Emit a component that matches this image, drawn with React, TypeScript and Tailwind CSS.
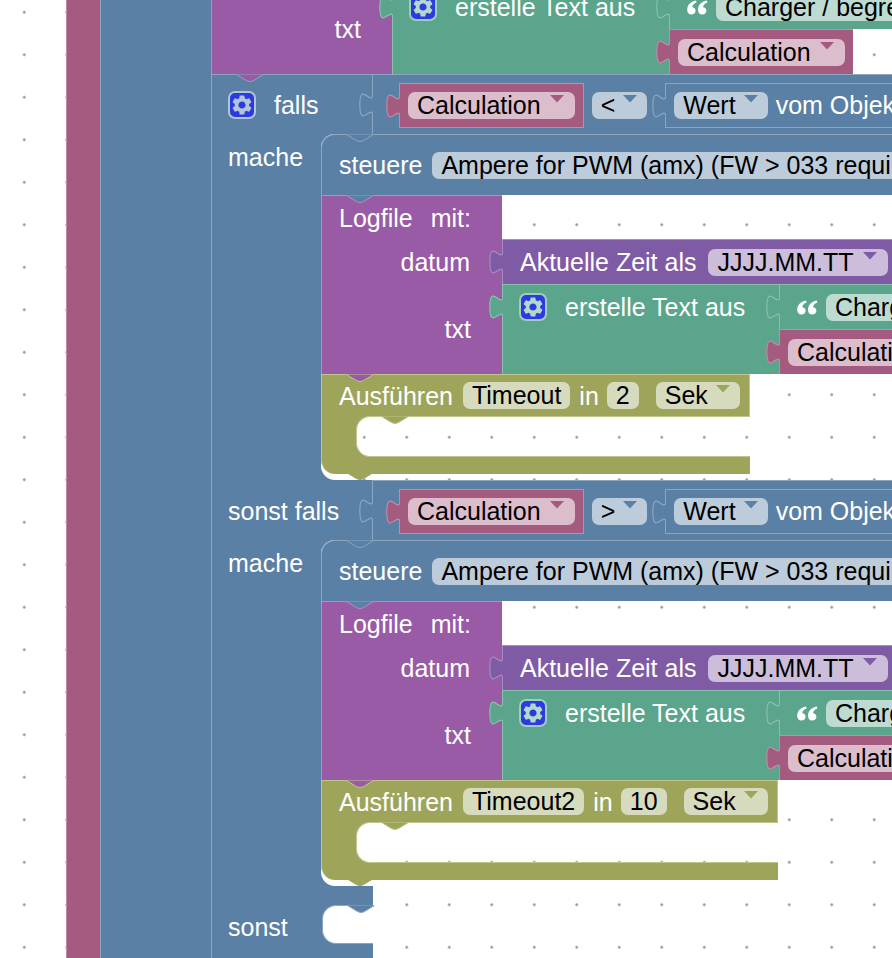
import { ReactNode } from "react";
import { MdSettings } from "react-icons/md";

// workspace grid, fixed so every cut-out of a block lines up with the same dots
const dots =
  "bg-white bg-[radial-gradient(circle,#999999_1px,transparent_1.6px)] bg-[length:42.5px_42.5px] bg-[position:3px_-9px] bg-fixed";

const tones = {
  blue: { pill: "bg-[#bdccdb]", arrow: "fill-[#5b80a5]" },
  maroon: { pill: "bg-[#dbbdcc]", arrow: "fill-[#a55b80]" },
  violet: { pill: "bg-[#ccbddb]", arrow: "fill-[#805ba5]" },
  olive: { pill: "bg-[#d7dbbd]", arrow: "fill-[#9ea55b]" },
  green: { pill: "bg-[#bddbd1]", arrow: "fill-[#5ba58c]" },
};

function Pill({ tone, arrow, tight, children }: { tone: keyof typeof tones; arrow?: boolean; tight?: boolean; children: ReactNode }) {
  const t = tones[tone];
  return (
    <span className={`flex h-[27px] shrink-0 items-start whitespace-pre rounded-[7px] pl-[9px] leading-[27px] text-black ${arrow ? (tight ? "pr-[10px]" : "pr-[11px]") : "pr-[9px]"} ${t.pill}`}>
      {children}
      {arrow && (
        <svg width="14" height="8" viewBox="0 0 14 8" className={`mt-[3px] ${tight ? "ml-[8px]" : "ml-[9px]"} ${t.arrow}`}>
          <path d="M0 0H14L7 7.5Z" />
        </svg>
      )}
    </span>
  );
}

// plain block text sits a pixel lower than the field text
function Label({ children, className = "" }: { children: ReactNode; className?: string }) {
  return <span className={`whitespace-pre pt-[2px] ${className}`}>{children}</span>;
}

// side puzzle tab of a value block
function Tab({ className, top = "top-[9px]" }: { className: string; top?: string }) {
  return (
    <svg width="14" height="26" viewBox="0 0 8.5 15.5" className={`absolute -left-[14px] z-10 ${top} ${className}`}>
      <path d="M8.5 15.25c0-10-8 8-8-7.5s8 2.5 8-7.5" strokeWidth="0.7" />
    </svg>
  );
}

// notch that a stacked block hangs into the next one
function Notch({ className, pos }: { className: string; pos: string }) {
  return (
    <svg width="28" height="9" viewBox="0 0 28 9" className={`absolute z-10 ${pos} ${className}`}>
      <path d="M0.5 0.5L10.5 6.6Q14 8.8 17.5 6.6L27.5 0.5" strokeWidth="1" />
    </svg>
  );
}

function Gear({ className, border }: { className: string; border: string }) {
  return (
    <span className={`flex h-[28px] w-[28px] shrink-0 items-center justify-center rounded-[7px] border-2 bg-[#2a3ce0] ${border}`}>
      <MdSettings size={24} className={className} />
    </span>
  );
}

function Quote() {
  return (
    <svg width="21" height="15" viewBox="0 0 21 15" className="shrink-0 fill-white">
      <path d="M9 0.6C3.6 1.8 0.2 5 0.2 9.8 0.2 12.8 1.8 14.6 4.4 14.6 6.8 14.6 8.6 13 8.6 10.8 8.6 8.6 7 7.2 5.2 7.2 5.4 5.2 6.8 3.6 9.6 2.6Z" />
      <path d="M19.8 0.6C14.4 1.8 11 5 11 9.8 11 12.8 12.6 14.6 15.2 14.6 17.6 14.6 19.4 13 19.4 10.8 19.4 8.6 17.8 7.2 16 7.2 16.2 5.2 17.6 3.6 20.4 2.6Z" />
    </svg>
  );
}

function LogBlock({ className = "" }: { className?: string }) {
  return (
    <div className={`relative flex h-[179px] shrink-0 text-white ${className}`}>
      <div className="flex w-[181px] shrink-0 flex-col border-l border-t border-[#b88cc0] bg-[#995ba5]">
        <div className="flex h-[44px] items-center gap-[18px] pl-[17px]">
          <Label>Logfile</Label>
          <Label>mit:</Label>
        </div>
        <div className="flex h-[44px] items-center justify-end pr-[32px]">
          <Label>datum</Label>
        </div>
        <div className="flex h-[89px] items-center justify-end pr-[31px]">
          <Label>txt</Label>
        </div>
      </div>
      <div className="flex w-[500px] flex-col">
        <div className="h-[44px]" />
        <div className="relative flex h-[45px] w-[394px] items-center border-l border-t border-[#a68cc0] bg-[#805ba5] pl-[17px]">
          <Tab className="fill-[#805ba5] stroke-[#a68cc0]" />
          <Label>Aktuelle Zeit als</Label>
          <span className="ml-[12px]">
            <Pill tone="violet" arrow>JJJJ.MM.TT</Pill>
          </span>
        </div>
        <div className="flex h-[90px]">
          <div className="relative w-[277px] shrink-0 border-l border-t border-[#8cc0ae] bg-[#5ba58c] pl-[16px]">
            <Tab className="fill-[#5ba58c] stroke-[#8cc0ae]" />
            <div className="flex h-[44px] items-center">
              <Gear className="text-[#b4d8cb]" border="border-[#a4ccbe]" />
              <Label className="ml-[18px]">erstelle Text aus</Label>
            </div>
          </div>
          <div className="flex w-[400px] flex-col">
            <div className="relative flex h-[45px] items-center border-l border-t border-[#8cc0ae] bg-[#5ba58c] pl-[17px]">
              <Tab className="fill-[#5ba58c] stroke-[#8cc0ae]" />
              <Quote />
              <span className="ml-[8px]">
                <Pill tone="green">Charger / begrenzen auf Minimum</Pill>
              </span>
            </div>
            <div className="relative flex h-[45px] w-[184px] items-center border-l border-t border-[#c08ca6] bg-[#a55b80] pl-[8px]">
              <Tab className="fill-[#a55b80] stroke-[#c08ca6]" />
              <Pill tone="maroon" arrow>Calculation</Pill>
            </div>
          </div>
        </div>
      </div>
      <Notch className="fill-[#5b80a5] stroke-[#b88cc0]" pos="left-[25px] top-0" />
    </div>
  );
}

function Exec({ width, name, secs }: { width: string; name: string; secs: string }) {
  return (
    <div className={`relative flex h-[100px] shrink-0 flex-col ${width}`}>
      <div className="flex h-[42px] items-center border-l border-r border-t border-[#c0c58c] bg-[#9ea55b] pl-[17px] text-white">
        <Label>Ausführen</Label>
        <span className="ml-[10px]">
          <Pill tone="olive">{name}</Pill>
        </span>
        <Label className="ml-[9px]">in</Label>
        <span className="ml-[8px]">
          <Pill tone="olive">{secs}</Pill>
        </span>
        <span className="ml-[17px]">
          <Pill tone="olive" arrow tight>Sek</Pill>
        </span>
      </div>
      <div className="h-[41px] border-l border-[#c0c58c] bg-[#9ea55b] pl-[34px]">
        <div className={`relative h-full rounded-l-[14px] border-b border-l border-t border-[#c0c58c] ${dots}`}>
          <Notch className="fill-[#9ea55b] stroke-[#c0c58c]" pos="left-[24px] -top-px" />
        </div>
      </div>
      <div className="h-[17px] rounded-bl-[14px] border-l border-[#c0c58c] bg-[#9ea55b]" />
      <Notch className="fill-[#9ea55b] stroke-[#9ea55b]" pos="left-[25px] -bottom-[7px]" />
      <Notch className="fill-[#995ba5] stroke-[#c0c58c]" pos="left-[25px] top-0" />
    </div>
  );
}

function Statement({ execWidth, name, secs }: { execWidth: string; name: string; secs: string }) {
  return (
    <div className="flex h-[346px] shrink-0">
      <div className="w-[110px] shrink-0 border-l border-[#8ca6c0] bg-[#5b80a5] pl-[16px] text-white">
        <div className="flex h-[46px] items-center">
          <Label>mache</Label>
        </div>
      </div>
      <div className="w-[600px] bg-[#5b80a5]">
        <div className={`flex h-full flex-col rounded-l-[14px] ${dots}`}>
          <div className="relative flex h-[61px] shrink-0 items-center rounded-tl-[14px] border-l border-t border-[#8ca6c0] bg-[#5b80a5] pl-[17px] text-white">
            <Label>steuere</Label>
            <span className="ml-[10px] w-[520px]">
              <Pill tone="blue">Ampere for PWM (amx) (FW &gt; 033 required)</Pill>
            </span>
            <Notch className="fill-[#5b80a5] stroke-[#8ca6c0]" pos="left-[24px] -top-px" />
          </div>
          <LogBlock />
          <Exec width={execWidth} name={name} secs={secs} />
        </div>
      </div>
    </div>
  );
}

function Condition({ op, children, tail }: { op: string; children: ReactNode; tail?: boolean }) {
  return (
    <div className="relative flex h-[60px] shrink-0 text-white">
      <div className={`flex h-full w-[161px] shrink-0 items-start border-l border-[#8ca6c0] bg-[#5b80a5] pl-[16px] pt-[16px] ${tail ? "border-t" : ""}`}>
        {children}
      </div>
      <div className="relative flex h-full w-[560px] items-start border-l border-t border-[#8ca6c0] bg-[#5b80a5] pl-[26px] pt-[8px]">
        <Tab className="fill-[#5b80a5] stroke-[#8ca6c0]" top="top-[17px]" />
        <div className="relative flex h-[45px] items-center border border-[#c08ca6] bg-[#a55b80] px-[8px]">
          <Tab className="fill-[#a55b80] stroke-[#c08ca6]" />
          <Pill tone="maroon" arrow>Calculation</Pill>
        </div>
        <span className="ml-[8px] mt-[9px]">
          <Pill tone="blue" arrow tight>{op}</Pill>
        </span>
        <div className="relative ml-[18px] flex h-[45px] w-[300px] items-center gap-[8px] border-b border-l border-t border-[#8ca6c0] pl-[8px]">
          <Tab className="fill-[#5b80a5] stroke-[#8ca6c0]" />
          <Pill tone="blue" arrow tight>Wert</Pill>
          <span className="whitespace-pre">vom Objekt</span>
        </div>
      </div>
      {tail && <Notch className="fill-[#995ba5] stroke-[#8ca6c0]" pos="left-[25px] top-0" />}
    </div>
  );
}

export default function App() {
  return (
    <div className={`flex h-[958px] w-[892px] overflow-hidden font-['Liberation_Sans',Arial,sans-serif] text-[25px] ${dots}`}>
      <div className="w-[66px] shrink-0" />
      <div className="w-[34px] shrink-0 border-l border-[#c08ca6] bg-[#a55b80]" />
      <div className="w-[111px] shrink-0 border-l border-[#8ca6c0] bg-[#5b80a5]" />
      <div className="flex w-[681px] shrink-0 flex-col">
        <LogBlock className="-mt-[105px]" />
        <Condition op="<" tail>
          <Gear className="text-[#b4c4d8]" border="border-[#b4c4d8]" />
          <span className="ml-[18px] leading-[28px]">falls</span>
        </Condition>
        <Statement execWidth="w-[429px]" name="Timeout" secs="2" />
        <Condition op=">">
          <span className="leading-[30px]">sonst falls</span>
        </Condition>
        <Statement execWidth="w-[457px]" name="Timeout2" secs="10" />
        {/* sonst branch, only its empty statement is in view */}
        <div className="h-[19px] w-[162px] shrink-0 border-l border-[#8ca6c0] bg-[#5b80a5]" />
        <div className="flex h-[39px] w-[162px] shrink-0 border-l border-[#8ca6c0] bg-[#5b80a5] text-white">
          <div className="flex w-[110px] shrink-0 items-center pl-[16px] pt-[7px]">sonst</div>
          <div className={`relative flex-1 rounded-l-[14px] border-b border-l border-t border-[#8ca6c0] ${dots}`}>
            <Notch className="fill-[#5b80a5] stroke-[#8ca6c0]" pos="left-[24px] -top-px" />
          </div>
        </div>
        <div className="h-[14px] w-[162px] shrink-0 border-l border-[#8ca6c0] bg-[#5b80a5]" />
      </div>
    </div>
  );
}
